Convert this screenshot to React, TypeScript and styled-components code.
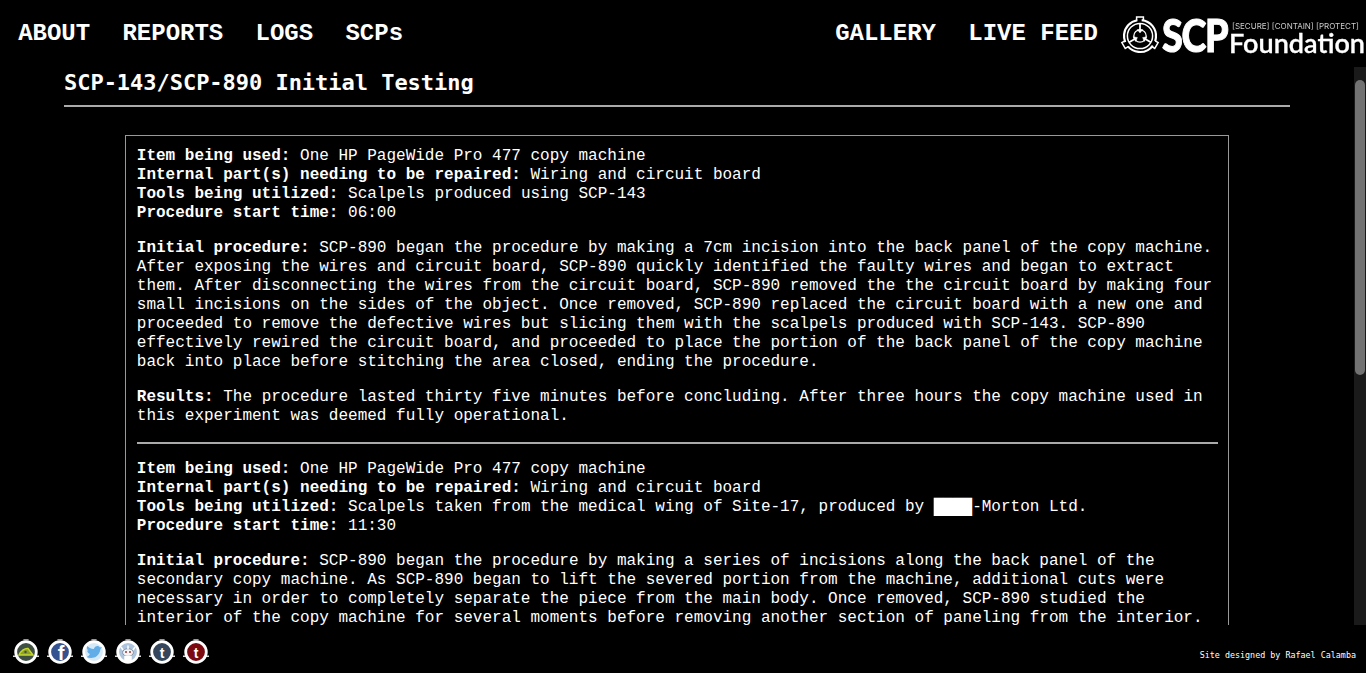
import styled, { createGlobalStyle } from 'styled-components';
import type { ReactNode } from 'react';

const GlobalStyle = createGlobalStyle`
  html, body {
    margin: 0;
    height: 100%;
    overflow: hidden;
    background: #000;
  }
`;

const Page = styled.div`
  height: 100vh;
  display: flex;
  flex-direction: column;
  background: #000;
  color: #fff;
  font-family: 'Liberation Mono', 'Courier New', monospace;
`;

const TopBar = styled.header`
  height: 67px;
  flex: none;
  display: flex;
  align-items: center;
  padding-left: 2px;
`;

const NavGroup = styled.nav`
  display: flex;
  margin-top: 1px;
`;

const NavLink = styled.a`
  padding: 0 16.15px;
  font-size: 24px;
  font-weight: 700;
  line-height: 28px;
  color: #fff;
`;

const Spacer = styled.div`
  flex: 1;
`;

const Logo = styled.div`
  width: 246px;
  flex: none;
  margin: 5px 0 0 6px;
  display: flex;
  align-items: center;
  filter: blur(0.3px);
`;

const LogoMark = styled.svg`
  width: 40px;
  height: 40px;
  flex: none;
`;

const LogoWords = styled.div`
  display: flex;
  margin-left: 2px;
`;

const LogoScp = styled.span`
  width: 66px;
  flex: none;
  font-family: 'Lato', 'Liberation Sans', sans-serif;
  font-weight: 900;
  font-size: 46px;
  line-height: 38px;
  letter-spacing: -1.6px;
  -webkit-text-stroke: 1px #fff;
  transform: scaleX(0.82);
  transform-origin: left center;
  white-space: nowrap;
`;

const LogoSide = styled.div`
  display: flex;
  flex-direction: column;
  padding-top: 5.5px;
  margin-left: 1px;
`;

const LogoTagline = styled.span`
  margin-left: 3px;
  font-family: 'Inter', 'Liberation Sans', sans-serif;
  font-size: 8px;
  line-height: 8px;
  color: #ccc;
  white-space: nowrap;
`;

const LogoName = styled.span`
  font-family: 'Lato', 'Liberation Sans', sans-serif;
  font-weight: 600;
  font-size: 27px;
  line-height: 26px;
  -webkit-text-stroke: 0.3px #fff;
  white-space: nowrap;
`;

const Body = styled.div`
  flex: 1;
  min-height: 0;
  display: flex;
`;

const Content = styled.main`
  flex: 1;
  min-width: 0;
  overflow: hidden;
  padding: 0 64px;
`;

const ScrollRail = styled.div`
  width: 12px;
  flex: none;
  padding: 13px 1px 0;
  box-sizing: border-box;
  background: #1a1a1a;
`;

const ScrollThumb = styled.div`
  height: 295px;
  background: #727272;
  border-radius: 5px;
`;

const Title = styled.h1`
  margin: 0;
  padding: 2px 0 8px;
  border-bottom: 2px solid #aaa;
  font-family: 'DejaVu Sans Mono', monospace;
  font-size: 22px;
  font-weight: 700;
  line-height: 28px;
  letter-spacing: -0.03px;
`;

const ReportBox = styled.section`
  margin: 28px 5% 0;
  padding: 11px 10px 10px 10.5px;
  border: 1px solid #999;
  font-size: 16px;
  line-height: 19px;
`;

const Para = styled.p`
  margin: 0 0 16px;

  &:last-child {
    margin-bottom: 0;
  }
`;

const Rule = styled.hr`
  margin: 12px 0 16px;
  border: 0;
  border-top: 2px solid #aaa;
`;

const Redacted = styled.span`
  background: #fff;
  color: #fff;
`;

const Fields = styled.p`
  margin: 0 0 16px;
`;

const FooterBar = styled.footer`
  height: 48px;
  flex: none;
  display: flex;
  align-items: center;
  justify-content: space-between;
  padding: 0 10px 0 13px;
`;

const SocialRow = styled.div`
  display: flex;
  gap: 8px;
  margin-top: 6px;
`;

const SocialIcon = styled.svg`
  width: 26px;
  height: 26px;
  display: block;
`;

const Credit = styled.span`
  margin-top: 12px;
  font-family: 'DejaVu Sans Mono', monospace;
  font-size: 8.4px;
  line-height: 12px;
  white-space: nowrap;
`;

const ScpMark = () => (
  <LogoMark viewBox="-20 -20 40 40" fill="none" stroke="#fff">
    <circle r="16" strokeWidth="2.2" strokeDasharray="28.5 5" transform="rotate(-84)" />
    {[0, 120, 240].map((angle) => (
      <g key={angle} transform={`rotate(${angle})`}>
        <path d="M-3.4 -15.5V-19H3.4V-15.5" strokeWidth="1.5" />
        <path d="M0 -12.5V-6" strokeWidth="1.8" />
        <path d="M-2.8 -6.4L0 -3L2.8 -6.4Z" fill="#fff" strokeWidth="0.4" />
      </g>
    ))}
    <circle r="12.6" strokeWidth="1.5" />
    <circle r="6.2" strokeWidth="1.3" />
  </LogoMark>
);

const Badge = ({ color, children }: { color: string; children: ReactNode }) => (
  <SocialIcon viewBox="-13 -13 26 26">
    <path d="M-2.6 -13h5.2v1.5h-5.2z" fill="#999" />
    <path d="M9.5 3.4h3.5v1.6h-3.5zM-9.5 3.4h-3.5v1.6h3.5z" fill="#ddd" />
    <circle r="10.3" fill={color} stroke="#fff" strokeWidth="2.8" />
    {children}
  </SocialIcon>
);

const GLYPH_FONT = "'Liberation Sans', sans-serif";

const Report = ({ tools, time, procedure, results }: {
  tools: ReactNode;
  time: string;
  procedure: string;
  results?: string;
}) => (
  <>
    <Fields>
      <strong>Item being used:</strong> One HP PageWide Pro 477 copy machine
      <br />
      <strong>Internal part(s) needing to be repaired:</strong> Wiring and circuit board
      <br />
      <strong>Tools being utilized:</strong> {tools}
      <br />
      <strong>Procedure start time:</strong> {time}
    </Fields>
    <Para>
      <strong>Initial procedure:</strong> {procedure}
    </Para>
    {results && (
      <Para>
        <strong>Results:</strong> {results}
      </Para>
    )}
  </>
);

export default function App() {
  return (
    <Page>
      <GlobalStyle />
      <TopBar>
        <NavGroup>
          <NavLink>ABOUT</NavLink>
          <NavLink>REPORTS</NavLink>
          <NavLink>LOGS</NavLink>
          <NavLink>SCPs</NavLink>
        </NavGroup>
        <Spacer />
        <NavGroup>
          <NavLink>GALLERY</NavLink>
          <NavLink>LIVE FEED</NavLink>
        </NavGroup>
        <Logo>
          <ScpMark />
          <LogoWords>
            <LogoScp>SCP</LogoScp>
            <LogoSide>
              <LogoTagline>[SECURE] [CONTAIN] [PROTECT]</LogoTagline>
              <LogoName>Foundation</LogoName>
            </LogoSide>
          </LogoWords>
        </Logo>
      </TopBar>
      <Body>
        <Content>
          <Title>SCP-143/SCP-890 Initial Testing</Title>
          <ReportBox>
            <Report
              tools="Scalpels produced using SCP-143"
              time="06:00"
              procedure="SCP-890 began the procedure by making a 7cm incision into the back panel of the copy machine. After exposing the wires and circuit board, SCP-890 quickly identified the faulty wires and began to extract them. After disconnecting the wires from the circuit board, SCP-890 removed the the circuit board by making four small incisions on the sides of the object. Once removed, SCP-890 replaced the circuit board with a new one and proceeded to remove the defective wires but slicing them with the scalpels produced with SCP-143. SCP-890 effectively rewired the circuit board, and proceeded to place the portion of the back panel of the copy machine back into place before stitching the area closed, ending the procedure."
              results="The procedure lasted thirty five minutes before concluding. After three hours the copy machine used in this experiment was deemed fully operational."
            />
            <Rule />
            <Report
              tools={
                <>
                  Scalpels taken from the medical wing of Site-17, produced by <Redacted>████</Redacted>-Morton Ltd.
                </>
              }
              time="11:30"
              procedure="SCP-890 began the procedure by making a series of incisions along the back panel of the secondary copy machine. As SCP-890 began to lift the severed portion from the machine, additional cuts were necessary in order to completely separate the piece from the main body. Once removed, SCP-890 studied the interior of the copy machine for several moments before removing another section of paneling from the interior."
            />
          </ReportBox>
        </Content>
        <ScrollRail>
          <ScrollThumb />
        </ScrollRail>
      </Body>
      <FooterBar>
        <SocialRow>
          <Badge color="#3f4f42">
            <path d="M-7 3C-5 -1.5 -1 -4 2 -3.5L7 3Z" fill="#8fa02a" stroke="#c4d82c" strokeWidth="1.4" />
            <circle cx="-.5" cy="0" r="1.2" fill="#3f4f42" />
          </Badge>
          <Badge color="#33528f">
            <text x="1" y="8" textAnchor="middle" fontFamily={GLYPH_FONT} fontSize="20" fontWeight="700" fill="#fff">f</text>
          </Badge>
          <Badge color="#d6e9f7">
            <path d="M-7.5 5C-3 7 5 6.5 6.5 -3L8 -5L6 -4.5C5 -6.5 1 -7 -.2 -3C-3 -3 -5.5 -4.5 -7 -6C-7.5 -3.5 -6.5 -2 -5.5 -1.2L-7 -1.5C-6.5 .5 -5.5 1.5 -4 2C-5 3.5 -6 4.5 -7.5 5Z" fill="#62ace8" />
          </Badge>
          <Badge color="#aec4dc">
            <ellipse cy="0.5" rx="5.4" ry="3.8" fill="#f4f6f8" stroke="#66768a" strokeWidth="0.7" />
            <circle cx="-2" cy="0" r="1" fill="#a33" />
            <circle cx="2" cy="0" r="1" fill="#a33" />
            <path d="M-3 4.5h6v5h-6zM-5 -2L-7 -5M5 -2L7 -5M0 -3V-6.5" stroke="#fff" strokeWidth="1.5" fill="#fff" />
          </Badge>
          <Badge color="#35465c">
            <text y="5.5" textAnchor="middle" fontFamily={GLYPH_FONT} fontSize="14" fontWeight="700" fill="#fff">t</text>
          </Badge>
          <Badge color="#7b0a12">
            <text y="5.5" textAnchor="middle" fontFamily={GLYPH_FONT} fontSize="14" fontWeight="700" fill="#fff">t</text>
          </Badge>
        </SocialRow>
        <Credit>Site designed by Rafael Calamba</Credit>
      </FooterBar>
    </Page>
  );
}
